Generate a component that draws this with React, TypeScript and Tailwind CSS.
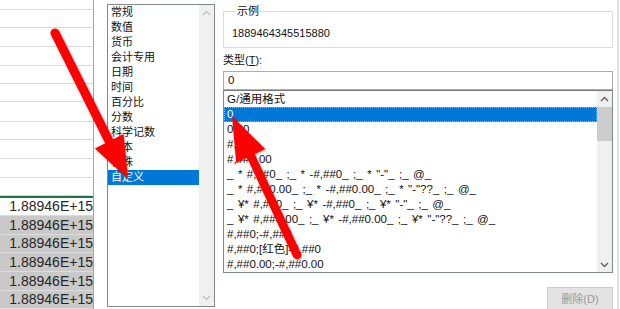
const gridRows = [
  'h-[10px]',
  'h-[19px]',
  'h-[20px]',
  'h-[19px]',
  'h-[19px]',
  'h-[19px]',
  'h-[20px]',
  'h-[19px]',
  'h-[19px]',
  'h-[20px]',
  'h-[19px]',
];

const selRows = ['h-[19px]', 'h-[19px]', 'h-[20px]', 'h-[19px]', 'h-[19px]'];

const categories = [
  '常规',
  '数值',
  '货币',
  '会计专用',
  '日期',
  '时间',
  '百分比',
  '分数',
  '科学记数',
  '文本',
  '特殊',
  '自定义',
];

const formats = [
  'G/通用格式',
  '0',
  '0.00',
  '#,##0',
  '#,##0.00',
  '_ * #,##0_ ;_ * -#,##0_ ;_ * "-"_ ;_ @_',
  '_ * #,##0.00_ ;_ * -#,##0.00_ ;_ * "-"??_ ;_ @_',
  '_ ¥* #,##0_ ;_ ¥* -#,##0_ ;_ ¥* "-"_ ;_ @_',
  '_ ¥* #,##0.00_ ;_ ¥* -#,##0.00_ ;_ ¥* "-"??_ ;_ @_',
  '#,##0;-#,##0',
  '#,##0;[红色]-#,##0',
  '#,##0.00;-#,##0.00',
];

const Chevron = ({ up, color }: { up?: boolean; color: string }) => (
  <svg width="9" height="6" viewBox="0 0 9 6" fill="none">
    <polyline
      points={up ? '1,5 4.5,1.5 8,5' : '1,1 4.5,4.5 8,1'}
      stroke={color}
      strokeWidth="1.4"
    />
  </svg>
);

const Cell = ({ text }: { text: string }) => (
  <div className="flex h-full items-end justify-end overflow-hidden pb-[1px] font-['Liberation_Sans',sans-serif] text-[14px] leading-[16px] text-[#262626]">
    {text}
  </div>
);

export default function App() {
  return (
    <div className="relative flex h-[309px] w-[620px] overflow-hidden bg-white font-['Liberation_Sans','Noto_Sans_CJK_SC',sans-serif] text-[11px] text-[#111111]">
      {/* worksheet behind the dialog */}
      <div className="flex w-[93px] shrink-0 flex-col bg-white">
        {gridRows.map((h, i) => (
          <div key={i} className={`${h} border-b border-[#dadada]`} />
        ))}
        <div className="h-[20px] border-t-2 border-b border-[#217346] border-b-[#dadada] bg-white">
          <Cell text="1.88946E+15" />
        </div>
        {selRows.map((h, i) => (
          <div key={i} className={`${h} border-b border-[#dcdcdc] bg-[#c9c9c9]`}>
            <Cell text="1.88946E+15" />
          </div>
        ))}
      </div>

      {/* format cells dialog */}
      <div className="flex flex-1 border-l border-[#a3a3a3] pl-[13px]">
        <div className="mt-[4px] flex h-[303px] w-[108px] shrink-0 border border-[#828790] bg-white">
          <div className="flex flex-1 flex-col">
            {categories.map((c) => (
              <div
                key={c}
                className={`h-[15px] pl-[3px] leading-[15px] ${c === '自定义' ? 'bg-[#0078d7] text-white' : ''}`}
              >
                {c}
              </div>
            ))}
          </div>
          <div className="flex w-[15px] flex-col items-center justify-between bg-[#f0f0f0] py-[5px]">
            <Chevron up color="#c2c2c2" />
            <Chevron color="#c2c2c2" />
          </div>
        </div>

        <div className="ml-[8px] flex w-[390px] shrink-0 flex-col">
          <fieldset className="mt-[4px] border border-[#dcdcdc] px-[8px] pt-[8px] pb-[6px]">
            <legend className="ml-[4px] px-[1px] leading-[14px]">示例</legend>
            <div className="leading-[15px]">1889464345515880</div>
          </fieldset>

          <div className="mt-[5px] leading-[15px]">
            类型(<span className="underline">T</span>):
          </div>

          <div className="mt-[3px] flex h-[24px] items-center border border-[#adadad] pl-[4px] text-[11.5px]">
            0
          </div>

          <div className="flex h-[183px] border border-t-[#7a7a7a] border-[#828790] bg-white">
            <div className="flex flex-1 flex-col overflow-hidden pt-[1px] text-[11.5px] [word-spacing:1.3px]">
              {formats.map((f) => (
                <div
                  key={f}
                  className={`h-[15px] shrink-0 whitespace-pre pl-[3px] leading-[15px] ${f === '0' ? 'bg-[#0078d7] text-white outline-1 outline-dotted outline-offset-[-1px] outline-[#e8a25a]' : ''}`}
                >
                  {f}
                </div>
              ))}
            </div>
            <div className="flex w-[15px] flex-col bg-[#f0f0f0]">
              <div className="flex h-[15px] items-center justify-center">
                <Chevron up color="#606060" />
              </div>
              <div className="mt-[1px] h-[34px] bg-[#cdcdcd]" />
              <div className="flex-1" />
              <div className="flex h-[15px] items-center justify-center">
                <Chevron color="#606060" />
              </div>
            </div>
          </div>

          <button
            disabled
            className="mt-[14px] h-[23px] w-[66px] shrink-0 self-end border border-[#cccccc] bg-[#e3e3e3] text-[#9a9a9a]"
          >
            删除(D)
          </button>
        </div>

        <div className="ml-[4px] w-[2px] shrink-0 bg-[#e1e1e1]" />
      </div>

      {/* red annotation arrows */}
      <svg
        className="pointer-events-none absolute inset-0 drop-shadow-[1px_1px_1px_rgba(0,0,0,0.35)]"
        width="620"
        height="309"
        viewBox="0 0 620 309"
      >
        <line x1="55" y1="33" x2="110" y2="143" stroke="#ff0000" strokeWidth="9" strokeLinecap="round" />
        <polygon points="128,179 123.5,134 94.9,148.6" fill="#ff0000" />
        <line x1="297" y1="255" x2="250" y2="154" stroke="#ff0000" strokeWidth="8.5" strokeLinecap="round" />
        <polygon points="232,116 265.2,149.1 236.2,162.7" fill="#ff0000" />
      </svg>
    </div>
  );
}
